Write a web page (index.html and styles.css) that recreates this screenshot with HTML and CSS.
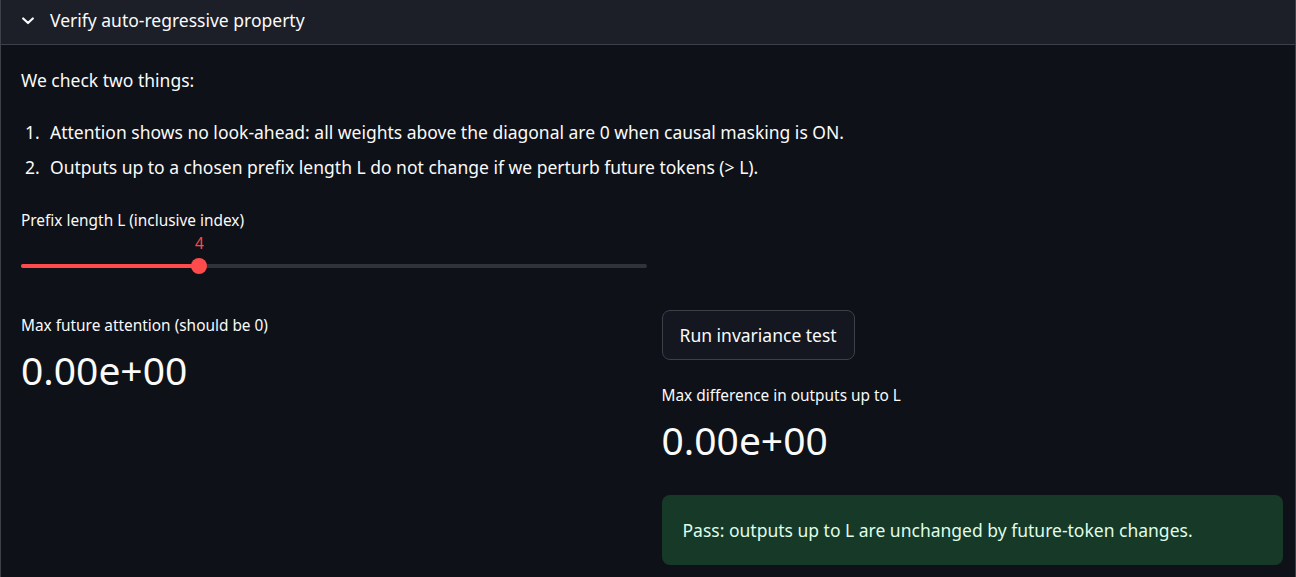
FILE: index.html
```html
<!DOCTYPE html>
<html>
<head>
<meta charset="utf-8">
<link rel="stylesheet" href="styles.css">
</head>
<body>
<div class="expander">
  <div class="exp-header">
    <svg class="chev" width="12" height="8" viewBox="0 0 12 8"><polyline points="1.2,1.5 6,6 10.8,1.5" fill="none" stroke="#fafafa" stroke-width="2.2" stroke-linecap="round" stroke-linejoin="round"/></svg>
    <span class="exp-title">Verify auto-regressive property</span>
  </div>
  <div class="exp-body">
    <p class="intro">We check two things:</p>
    <ol class="list">
      <li>Attention shows no look-ahead: all weights above the diagonal are 0 when causal masking is ON.</li>
      <li>Outputs up to a chosen prefix length L do not change if we perturb future tokens (&gt; L).</li>
    </ol>
    <div class="slider">
      <div class="label">Prefix length L (inclusive index)</div>
      <div class="track-wrap">
        <div class="track">
          <div class="fill" style="width:28.5%"></div>
          <div class="thumb" style="left:28.5%"><span class="val">4</span></div>
        </div>
      </div>
    </div>
    <div class="cols">
      <div class="col">
        <div class="metric">
          <div class="label">Max future attention (should be 0)</div>
          <div class="mval">0.00e+00</div>
        </div>
      </div>
      <div class="col">
        <button class="btn">Run invariance test</button>
        <div class="metric m2">
          <div class="label">Max difference in outputs up to L</div>
          <div class="mval">0.00e+00</div>
        </div>
        <div class="success">Pass: outputs up to L are unchanged by future-token changes.</div>
      </div>
    </div>
  </div>
</div>
</body>
</html>
```
FILE: styles.css
```css
* , *::before, *::after { box-sizing: border-box; }
html, body { margin: 0; padding: 0; background: #0e1117; height: 100%; overflow: hidden; }
body { font-family: "Noto Sans", sans-serif; color: #fafafa; }
.expander {
  border: 1px solid #3d4049;
  border-top: none;
  border-radius: 0 0 8px 8px;
  min-height: 600px;
}
.exp-header {
  height: 45px;
  background: #1c1f27;
  border-bottom: 1px solid #3d4049;
  display: flex;
  align-items: center;
  padding: 0 0 3px 21px;
  gap: 16px;
}
.chev { flex: none; }
.exp-title { font-size: 17.5px; line-height: 1; }
.exp-body { padding: 22px 12px 0 20px; }
.intro { margin: 0; font-size: 17.5px; line-height: 26px; }
.list { margin: 26px 0 0; padding: 0; list-style: none; counter-reset: n; font-size: 17.5px; }
.list li { line-height: 26px; margin-bottom: 9px; display: flex; counter-increment: n; }
.list li::before { content: counter(n) "."; flex: none; width: 29px; padding-left: 4px; }
.slider { width: 626px; margin-top: 31px; }
.label { font-size: 15.4px; line-height: 20px; }
.track-wrap { padding: 33px 0 10px; }
.track { position: relative; height: 4px; background: #31333b; border-radius: 2px; }
.fill { height: 4px; background: #ff4b4b; border-radius: 2px; }
.thumb {
  position: absolute; top: -6px; width: 16px; height: 16px; margin-left: -8px;
  border-radius: 50%; background: #ff4b4b;
}
.val {
  position: absolute; bottom: 22px; left: 50%; transform: translateX(-50%);
  color: #ff4b4b; font-size: 15.4px; line-height: 16px;
}
.cols { display: flex; gap: 16px; margin-top: 32px; }
.col { flex: 1; min-width: 0; }
.col:first-child { padding-top: 6px; }
.col:last-child { padding-left: 3px; }
.mval { font-size: 39px; line-height: 48px; margin-top: 10px; }
.btn {
  font-family: inherit; font-size: 17.5px; color: #fafafa;
  background: #14171f; border: 1px solid #3d4049; border-radius: 8px;
  height: 50px; padding: 0 17px; cursor: pointer;
}
.m2 { margin-top: 26px; }
.success {
  margin-top: 31px;
  background: #173928; color: #dffde9;
  border-radius: 8px; padding: 22px 20px 22px 21px;
  font-size: 17.5px; line-height: 26px;
}
```
